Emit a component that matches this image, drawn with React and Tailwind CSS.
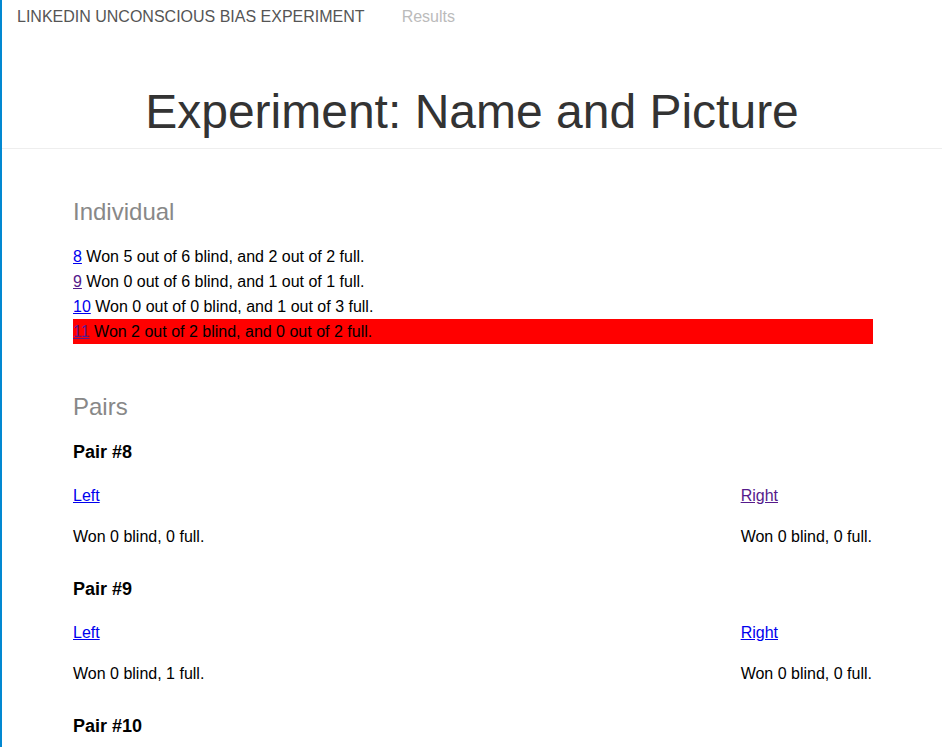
import React from 'react';

const individuals = [
  { id: 8, text: 'Won 5 out of 6 blind, and 2 out of 2 full.' },
  { id: 9, text: 'Won 0 out of 6 blind, and 1 out of 1 full.', visited: true },
  { id: 10, text: 'Won 0 out of 0 blind, and 1 out of 3 full.' },
  { id: 11, text: 'Won 2 out of 2 blind, and 0 out of 2 full.', visited: true, flagged: true },
];

const pairs = [
  { id: 8, left: 'Won 0 blind, 0 full.', right: 'Won 0 blind, 0 full.', rightVisited: true },
  { id: 9, left: 'Won 0 blind, 1 full.', right: 'Won 0 blind, 0 full.' },
  { id: 10, left: 'Won 0 blind, 0 full.', right: 'Won 0 blind, 0 full.' },
];

function Link({ children, visited }) {
  return (
    <a href="#" className={`underline ${visited ? 'text-[#551a8b]' : 'text-[#0000ee]'}`}>
      {children}
    </a>
  );
}

export default function App() {
  return (
    <div className="min-h-screen bg-white border-l-2 border-[#0288d1] text-black font-['Liberation_Sans',Arial,sans-serif]">
      {/* NAVBAR */}
      <nav className="h-8 pt-[2px] flex items-center pl-[15px] text-[16px]">
        <span className="text-[#555]">LINKEDIN UNCONSCIOUS BIAS EXPERIMENT</span>
        <a href="#" className="ml-[37px] text-[#bbb]">Results</a>
      </nav>

      {/* TITLE */}
      <header className="pt-[53px] pb-[10px] border-b border-[#eee]">
        <h1 className="text-[48px] leading-[53px] text-center text-[#333]">Experiment: Name and Picture</h1>
      </header>

      <main className="w-[800px] ml-[71px] pb-10">
        {/* INDIVIDUAL */}
        <h3 className="mt-[50px] text-[24px] leading-[26px] text-[#888]">Individual</h3>
        <div className="mt-[19px] text-[16px] leading-[25px]">
          {individuals.map(row => (
            <div key={row.id} className={row.flagged ? 'bg-[#ff0000]' : ''}>
              <Link visited={row.visited}>{row.id}</Link> {row.text}
            </div>
          ))}
        </div>

        {/* PAIRS */}
        <h3 className="mt-[50px] text-[24px] leading-[26px] text-[#888]">Pairs</h3>
        <div className="mt-[22px]">
          {pairs.map(p => (
            <div key={p.id} className="mb-[30px]">
              <h4 className="text-[18px] leading-[20px] font-bold">Pair #{p.id}</h4>
              <div className="mt-[21px] flex justify-between text-[16px] leading-[25px]">
                <div className="flex flex-col gap-[16px]">
                  <div><Link>Left</Link></div>
                  <div>{p.left}</div>
                </div>
                <div className="mr-px flex flex-col gap-[16px]">
                  <div><Link visited={p.rightVisited}>Right</Link></div>
                  <div>{p.right}</div>
                </div>
              </div>
            </div>
          ))}
        </div>
      </main>
    </div>
  );
}
